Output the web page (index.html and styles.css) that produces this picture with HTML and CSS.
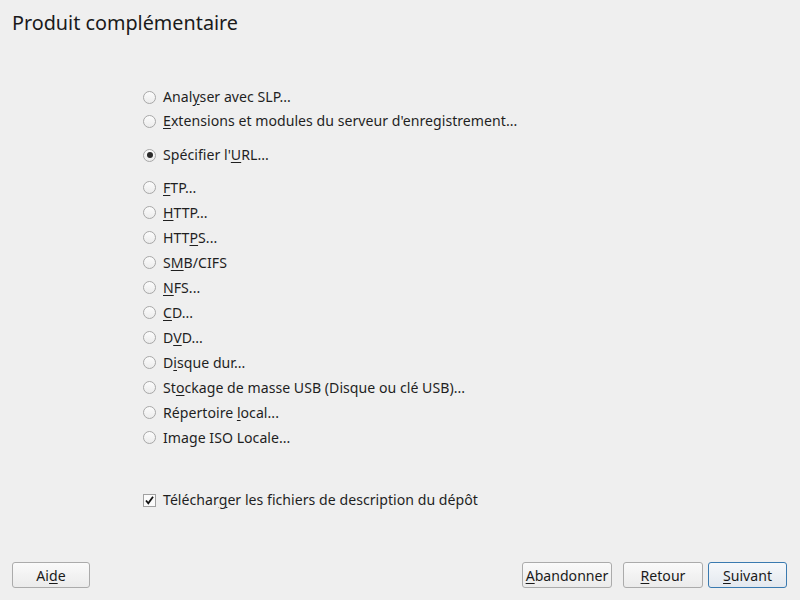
FILE: index.html
```html
<!DOCTYPE html>
<html lang="fr">
<head>
<meta charset="utf-8">
<title>Produit complémentaire</title>
<link rel="stylesheet" href="styles.css">
</head>
<body>
<div class="window">
  <h1 class="title">Produit complémentaire</h1>
  <div class="content">
    <div class="group g1">
      <div class="opt"><span class="radio"></span><span class="label">Anal<u>y</u>ser avec SLP...</span></div>
      <div class="opt"><span class="radio"></span><span class="label"><u>E</u>xtensions et modules du serveur d'enregistrement...</span></div>
    </div>
    <div class="group g2">
      <div class="opt"><span class="radio checked"></span><span class="label">Spécifier l'<u>U</u>RL...</span></div>
    </div>
    <div class="group g3">
      <div class="opt"><span class="radio"></span><span class="label"><u>F</u>TP...</span></div>
      <div class="opt"><span class="radio"></span><span class="label"><u>H</u>TTP...</span></div>
      <div class="opt"><span class="radio"></span><span class="label">HTT<u>P</u>S...</span></div>
      <div class="opt"><span class="radio"></span><span class="label">S<u>M</u>B/CIFS</span></div>
      <div class="opt"><span class="radio"></span><span class="label"><u>N</u>FS...</span></div>
      <div class="opt"><span class="radio"></span><span class="label"><u>C</u>D...</span></div>
      <div class="opt"><span class="radio"></span><span class="label">D<u>V</u>D...</span></div>
      <div class="opt"><span class="radio"></span><span class="label">D<u>i</u>sque dur...</span></div>
      <div class="opt"><span class="radio"></span><span class="label">St<u>o</u>ckage de masse USB (Disque ou clé USB)...</span></div>
      <div class="opt"><span class="radio"></span><span class="label">Répertoire <u>l</u>ocal...</span></div>
      <div class="opt"><span class="radio"></span><span class="label">Image ISO Locale...</span></div>
    </div>
    <div class="group g4">
      <div class="opt"><span class="check"><svg width="11" height="11" viewBox="0 0 11 11"><path d="M2 5.5 L4.3 8.3 L9 1.8" fill="none" stroke="#111" stroke-width="1.8"/></svg></span><span class="label">Téléchar<u>g</u>er les fichiers de description du dépôt</span></div>
    </div>
  </div>
  <div class="footer">
    <button class="btn btn-aide">Ai<u>d</u>e</button>
    <div class="spacer"></div>
    <button class="btn btn-abandon"><u>A</u>bandonner</button>
    <button class="btn btn-retour"><u>R</u>etour</button>
    <button class="btn btn-suivant default"><u>S</u>uivant</button>
  </div>
</div>
</body>
</html>
```

FILE: styles.css
```css
html, body {
  margin: 0;
  padding: 0;
  background: #efefef;
}
body {
  font-family: "Noto Sans", "Open Sans", "DejaVu Sans", sans-serif;
  font-size: 14.1px;
  color: #1f1f1f;
}
.window {
  width: 800px;
  height: 600px;
  display: flex;
  flex-direction: column;
  box-sizing: border-box;
}
.title {
  margin: 0;
  padding: 9px 0 0 12px;
  height: 41px;
  box-sizing: border-box;
  font-size: 19.8px;
  font-weight: normal;
  line-height: 28px;
  color: #1a1a1a;
}
.content {
  padding: 44px 0 0 143px;
  display: flex;
  flex-direction: column;
  flex: 1;
}
.group {
  display: flex;
  flex-direction: column;
}
.g1 .opt, .g2 .opt, .g4 .opt { height: 24px; }
.g3 .opt { height: 25px; }
.g2 { margin-top: 10px; }
.g3 { margin-top: 8px; }
.g4 { margin-top: 38px; }
.opt {
  display: flex;
  align-items: center;
}
.label {
  margin-left: 7px;
  line-height: 20px;
  white-space: nowrap;
  letter-spacing: 0.03px;
}
u {
  text-decoration: underline;
  text-underline-offset: 2px;
  text-decoration-thickness: 1px;
}
.radio {
  width: 11px;
  height: 11px;
  border: 1px solid #a8a8a8;
  border-radius: 50%;
  background: linear-gradient(#fcfcfc, #ececec);
  display: inline-flex;
  align-items: center;
  justify-content: center;
  flex: none;
}
.radio.checked::after {
  content: "";
  width: 6px;
  height: 6px;
  border-radius: 50%;
  background: #2a2a2a;
}
.check {
  width: 11px;
  height: 11px;
  border: 1px solid #a0a0a0;
  background: #fbfbfb;
  display: inline-flex;
  align-items: center;
  justify-content: center;
  flex: none;
}
.check svg { display: block; }
.footer {
  display: flex;
  align-items: center;
  padding: 0 13px 12px 12px;
}
.spacer { flex: 1; }
.btn {
  font-family: "Noto Sans", "Open Sans", "DejaVu Sans", sans-serif;
  font-size: 14.1px;
  color: #1a1a1a;
  height: 26px;
  padding: 1px 0 0 0;
  border: 1px solid #ababab;
  border-radius: 3px;
  background: linear-gradient(#fafafa, #ebebeb);
  box-sizing: border-box;
  line-height: 22px;
}
.btn-aide { width: 78px; }
.btn-abandon { width: 90px; }
.btn-retour { width: 80px; margin-left: 11px; }
.btn-suivant { width: 79px; margin-left: 5px; }
.btn.default {
  border-color: #3a7ab0;
  background: linear-gradient(#f6f8fa, #e3e8ee);
}
```
